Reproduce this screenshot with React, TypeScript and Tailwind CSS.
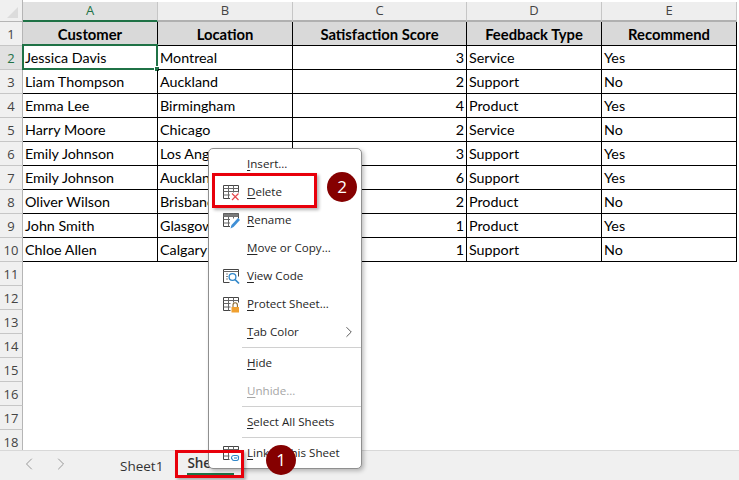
import { ChevronLeft, ChevronRight } from "lucide-react"

const columns = ["A", "B", "C", "D", "E"]
const headers = ["Customer", "Location", "Satisfaction Score", "Feedback Type", "Recommend"]
const rows: [string, string, number, string, string][] = [
  ["Jessica Davis", "Montreal", 3, "Service", "Yes"],
  ["Liam Thompson", "Auckland", 2, "Support", "No"],
  ["Emma Lee", "Birmingham", 4, "Product", "Yes"],
  ["Harry Moore", "Chicago", 2, "Service", "No"],
  ["Emily Johnson", "Los Angeles", 3, "Support", "Yes"],
  ["Emily Johnson", "Auckland", 6, "Support", "Yes"],
  ["Oliver Wilson", "Brisbane", 2, "Product", "No"],
  ["John Smith", "Glasgow", 1, "Product", "Yes"],
  ["Chloe Allen", "Calgary", 1, "Support", "No"],
]
const emptyRows = [11, 12, 13, 14, 15, 16, 17, 18]

const gridCols = "grid grid-cols-[23px_135px_135px_174px_135px_135px_2px]"
const cellFont = "font-['Lato',sans-serif] text-black"

function RowHeader({ n, active }: { n: number; active?: boolean }) {
  return (
    <div
      className={`flex h-[24px] items-center justify-center border-r border-b pt-[3px] text-[13px] ${
        active
          ? "border-r-[#1f7246] border-b-[#c6c6c6] bg-[#e1e1e1] text-[#1f7246]"
          : "border-r-[#b5b5b5] border-b-[#c6c6c6] bg-[#f0f0f0] text-[#444]"
      }`}
    >
      {n}
    </div>
  )
}

function GridIcon({ children }: { children?: React.ReactNode }) {
  return (
    <svg width="18" height="18" viewBox="0 0 18 18" fill="none" className="shrink-0">
      <path d="M1.5 2.5h15v8M1.5 2.5v13h8" stroke="#444" />
      <path d="M1.5 5.5h15M1.5 8.5h15M1.5 12h9M6.5 2.5v13M11.5 2.5v8" stroke="#666" />
      {children}
    </svg>
  )
}

function DeleteIcon() {
  return (
    <GridIcon>
      <rect x="8" y="9.5" width="10" height="8.5" fill="#fff" />
      <path d="M10 10.5l6.5 6.5M16.5 10.5l-6.5 6.5" stroke="#e5484d" strokeWidth="1.2" />
    </GridIcon>
  )
}

function RenameIcon() {
  return (
    <GridIcon>
      <path d="M1.5 2.5h15v3h-15z" fill="#7a7a7a" />
      <path d="M8 7.5h10v10.5h-10z" fill="#fff" />
      <path d="M8.5 17.5l1-3.5 6.5-7 2 2-6.5 7z" fill="#3f8fd6" />
    </GridIcon>
  )
}

function ViewCodeIcon() {
  return (
    <svg width="18" height="18" viewBox="0 0 18 18" fill="none" className="shrink-0">
      <path d="M1.5 2.5h15v7M1.5 2.5v13h6" stroke="#444" />
      <path d="M1.5 4.5h15" stroke="#666" />
      <path d="M4 7h2M4 9.5h2M4 12h2" stroke="#888" />
      <circle cx="10.5" cy="10" r="3.4" stroke="#2f86c9" strokeWidth="1.3" />
      <path d="M13 12.5l4 4" stroke="#2f86c9" strokeWidth="1.7" />
    </svg>
  )
}

function ProtectIcon() {
  return (
    <GridIcon>
      <rect x="8.5" y="7.5" width="9.5" height="10.5" fill="#fff" />
      <path d="M11 12v-2a2.2 2.2 0 0 1 4.4 0v2" stroke="#8a6a30" strokeWidth="1.1" />
      <rect x="9.5" y="12" width="7.5" height="5.5" fill="#f0a030" />
    </GridIcon>
  )
}

function LinkIcon() {
  return (
    <GridIcon>
      <rect x="7.5" y="8.5" width="10.5" height="9.5" fill="#fff" />
      <path d="M10.5 15.5c-2-1-1-4 1.5-4h2.5c1.5 0 2.5 1 2 2.2M16 13c1.2 1.2.4 3.5-1.5 3.5h-2.5c-1.3 0-2-.8-1.8-2" stroke="#2f86c9" strokeWidth="1.1" />
      <path d="M12 14h3" stroke="#2f86c9" strokeWidth="1.1" />
    </GridIcon>
  )
}

function MenuItem({
  icon,
  first,
  rest,
  disabled,
  submenu,
}: {
  icon?: React.ReactNode
  first: string
  rest: string
  disabled?: boolean
  submenu?: boolean
}) {
  return (
    <div className={`flex h-[28px] items-center ${disabled ? "text-[#a6a6a6]" : "text-[#262626]"}`}>
      <div className="flex w-[38px] shrink-0 justify-end pr-[7px]">{icon}</div>
      <span>
        <span className="underline underline-offset-2">{first}</span>
        {rest}
      </span>
      {submenu && <ChevronRight className="mr-[3px] ml-auto" size={18} strokeWidth={1} />}
    </div>
  )
}

function MenuSeparator() {
  return (
    <div className="flex h-[3px] items-center pl-[33px]">
      <div className="h-[1px] w-full bg-[#d0d0d0]" />
    </div>
  )
}

function Callout({ n, className }: { n: number; className: string }) {
  return (
    <div
      className={`absolute flex h-[30px] w-[30px] items-center justify-center rounded-full bg-[#850000] font-['Open_Sans',sans-serif] text-[17px] text-white ${className}`}
    >
      {n}
    </div>
  )
}

export default function App() {
  return (
    <div className="relative flex h-[480px] w-[739px] flex-col overflow-hidden bg-white font-['Open_Sans',sans-serif]">
      {/* sheet */}
      <div className="flex-1 overflow-hidden">
        <div className={gridCols}>
          <div className="flex h-[22px] items-end justify-end border-r border-b border-[#b5b5b5] bg-[#f0f0f0] pt-[2px] pr-[4px] pb-[3px]">
            <div className="h-0 w-0 border-b-[11px] border-l-[11px] border-b-[#dcdcdc] border-l-transparent" />
          </div>
          {columns.map((c, i) => (
            <div
              key={c}
              className={`mt-[2px] flex h-[20px] items-center justify-center border-r border-r-[#c6c6c6] text-[13px] ${
                i === 0
                  ? "border-b-2 border-b-[#1f7246] bg-[#e1e1e1] text-[#1f7246]"
                  : "border-b-2 border-b-[#b0b0b0] bg-[#eeeeee] text-[#444]"
              }`}
            >
              {c}
            </div>
          ))}
          <div />

          <RowHeader n={1} />
          {headers.map((h) => (
            <div
              key={h}
              className={`flex h-[24px] items-center justify-center border-r border-b border-black bg-[#d9d9d9] pt-[1px] text-[14.8px] font-bold ${cellFont}`}
            >
              {h}
            </div>
          ))}
          <div />

          {rows.map((row, i) => (
            <div key={i} className="contents">
              <RowHeader n={i + 2} active={i === 0} />
              {row.map((value, j) => (
                <div
                  key={j}
                  className={`relative flex h-[24px] items-center border-r border-b border-black px-[2px] pt-[1px] text-[14.3px] ${cellFont} ${
                    j === 2 ? "justify-end" : ""
                  }`}
                >
                  {value}
                  {i === 0 && j === 0 && (
                    <div className="absolute top-[-2px] left-[-1px] h-[26px] w-[136px] border-2 border-[#1f7246]">
                      <div className="absolute right-[-4px] bottom-[-4px] h-[6px] w-[6px] border border-white bg-[#1f7246]" />
                    </div>
                  )}
                </div>
              ))}
              <div />
            </div>
          ))}

          {emptyRows.map((n) => (
            <div key={n} className="contents">
              <RowHeader n={n} />
              <div className="col-span-6 h-[24px]" />
            </div>
          ))}
        </div>
      </div>

      {/* sheet tabs */}
      <div className="flex h-[30px] shrink-0 items-start border-t border-[#d8d8d8] bg-[#f0f0f0] text-[13.5px] text-[#333]">
        <ChevronLeft className="mt-[3px] ml-[19px] text-[#999]" size={20} strokeWidth={1.2} />
        <ChevronRight className="mt-[3px] ml-[12px] text-[#999]" size={20} strokeWidth={1.2} />
        <span className="mt-[5px] ml-[49px]">Sheet1</span>
        <div className="mt-[2px] ml-[24px] flex h-[22px] flex-col font-semibold">
          <span>Sheet2</span>
          <div className="mt-auto h-[2px] w-[47px] bg-[#1f7246]" />
        </div>
      </div>

      {/* context menu */}
      <div className="absolute top-[148px] left-[208px] h-[321px] w-[154px] rounded-[5px] border border-[#8f8f8f] bg-white pt-[1px] text-[11.6px] shadow-[2px_2px_4px_rgba(0,0,0,0.25)]">
        <MenuItem first="I" rest="nsert..." />
        <MenuItem icon={<DeleteIcon />} first="D" rest="elete" />
        <MenuItem icon={<RenameIcon />} first="R" rest="ename" />
        <MenuItem first="M" rest="ove or Copy..." />
        <MenuItem icon={<ViewCodeIcon />} first="V" rest="iew Code" />
        <MenuItem icon={<ProtectIcon />} first="P" rest="rotect Sheet..." />
        <MenuItem first="T" rest="ab Color" submenu />
        <MenuSeparator />
        <MenuItem first="H" rest="ide" />
        <MenuItem first="U" rest="nhide..." disabled />
        <MenuSeparator />
        <MenuItem first="S" rest="elect All Sheets" />
        <MenuSeparator />
        <MenuItem icon={<LinkIcon />} first="L" rest="ink to this Sheet" />
      </div>

      {/* annotations */}
      <div className="absolute top-[173px] left-[212px] h-[35px] w-[105px] border-[3px] border-[#e8000b] shadow-[2px_2px_3px_rgba(0,0,0,0.3)]" />
      <div className="absolute top-[450px] left-[175px] h-[28px] w-[69px] border-[3px] border-[#e8000b] shadow-[2px_2px_3px_rgba(0,0,0,0.3)]" />
      <Callout n={2} className="top-[172px] left-[327px]" />
      <Callout n={1} className="top-[445px] left-[266px]" />
    </div>
  )
}
